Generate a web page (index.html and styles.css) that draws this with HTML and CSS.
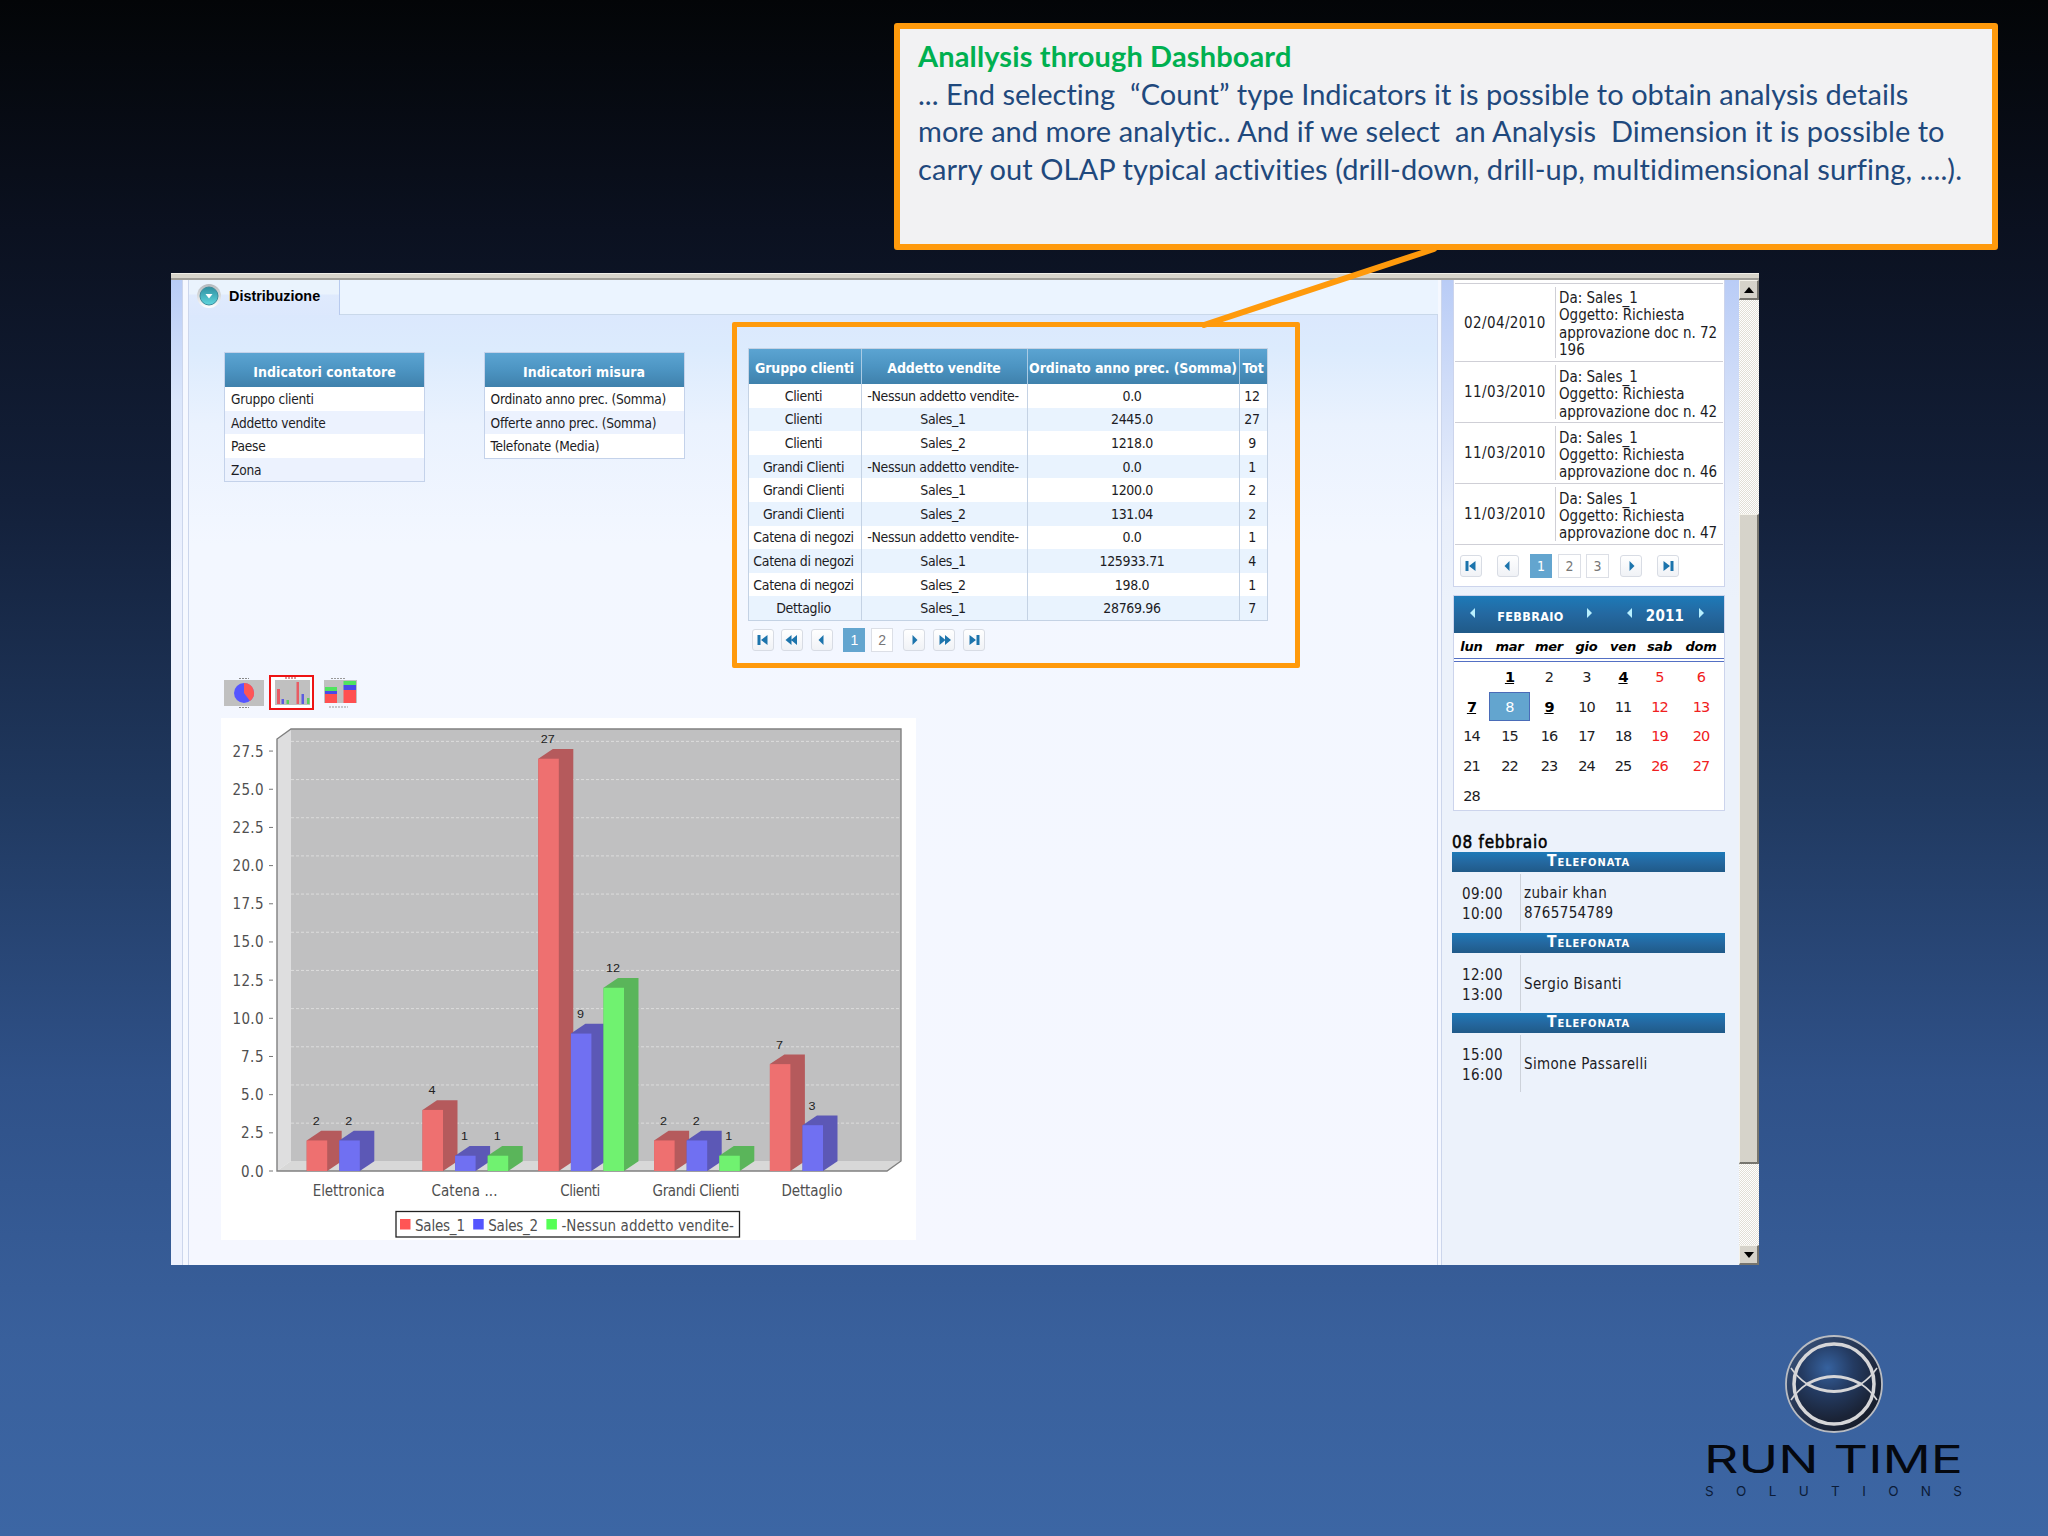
FILE: index.html
```html
<!DOCTYPE html>
<html lang="en">
<head>
    <meta charset="UTF-8">
    <title>Analysis through Dashboard</title>
    <link rel="stylesheet" href="styles.css">
</head>
<body>
    <!-- icons used by the pagers -->
    <svg class="defs" width="0" height="0">
        <symbol id="first" viewBox="0 0 20 20"><path d="M4.500 5h3v10h-3zM14.500 5v10l-6.500-5z"/></symbol>
        <symbol id="rewind" viewBox="0 0 20 20"><path d="M9.500 5v10l-6-5zM15 5v10l-6-5z"/></symbol>
        <symbol id="prev" viewBox="0 0 20 20"><path d="M11.500 5v10l-5-5z"/></symbol>
        <symbol id="next" viewBox="0 0 20 20"><path d="M8.500 5v10l5-5z"/></symbol>
        <symbol id="forward" viewBox="0 0 20 20"><path d="M5.500 5v10l6-5zM11 5v10l6-5z"/></symbol>
        <symbol id="last" viewBox="0 0 20 20"><path d="M12.500 5h3v10h-3zM5.500 5v10l6.500-5z"/></symbol>
    </svg>

    <div class="callout">
        <p class="title">Anallysis through Dashboard</p>
        <p>... End selecting  “Count” type Indicators it is possible to obtain analysis details</p>
        <p>more and more analytic.. And if we select  an Analysis  Dimension it is possible to</p>
        <p class="loose">carry out OLAP typical activities (drill-down, drill-up, multidimensional surfing, ....).</p>
    </div>

    <div class="window">
        <div class="window-top"></div>
        <div class="window-body">
            <div class="left-strip"></div>

            <main class="content">
                <div class="tabs">
                    <div class="tab">
                        <svg width="26" height="28" viewBox="0 0 26 28">
                            <defs>
                                <linearGradient id="ring" x1="0" y1="0" x2="0" y2="1">
                                    <stop offset="0" stop-color="#b4b8bc"/>
                                    <stop offset="1" stop-color="#ffffff"/>
                                </linearGradient>
                                <linearGradient id="teal" x1="0" y1="0" x2="0" y2="1">
                                    <stop offset="0" stop-color="#2f8fa0"/>
                                    <stop offset="1" stop-color="#5fd6de"/>
                                </linearGradient>
                            </defs>
                            <circle cx="13" cy="14" r="12" fill="url(#ring)"/>
                            <circle cx="13" cy="14" r="9" fill="url(#teal)" stroke="#3a8c9c"/>
                            <path d="M9.500 12h7l-3.500 4.500z" fill="#fff"/>
                        </svg>
                        <span>Distribuzione</span>
                    </div>
                    <div class="tab-rest"></div>
                </div>

                <div class="tab-page">
                    <div class="indicators">
                        <div class="list">
                            <h3>Indicatori contatore</h3>
                            <ul>
                                <li>Gruppo clienti</li>
                                <li>Addetto vendite</li>
                                <li>Paese</li>
                                <li>Zona</li>
                            </ul>
                        </div>
                        <div class="list">
                            <h3>Indicatori misura</h3>
                            <ul>
                                <li>Ordinato anno prec. (Somma)</li>
                                <li>Offerte anno prec. (Somma)</li>
                                <li>Telefonate (Media)</li>
                            </ul>
                        </div>
                        <div class="highlight">
                            <table class="data">
                                <colgroup><col class="c1"><col class="c2"><col class="c3"><col class="c4"></colgroup>
                                <thead>
                                    <tr><th>Gruppo clienti</th><th>Addetto vendite</th><th>Ordinato anno prec. (Somma)</th><th>Tot</th></tr>
                                </thead>
                                <tbody>
                                    <tr><td>Clienti</td><td>-Nessun addetto vendite-</td><td>0.0</td><td>12</td></tr>
                                    <tr><td>Clienti</td><td>Sales_1</td><td>2445.0</td><td>27</td></tr>
                                    <tr><td>Clienti</td><td>Sales_2</td><td>1218.0</td><td>9</td></tr>
                                    <tr><td>Grandi Clienti</td><td>-Nessun addetto vendite-</td><td>0.0</td><td>1</td></tr>
                                    <tr><td>Grandi Clienti</td><td>Sales_1</td><td>1200.0</td><td>2</td></tr>
                                    <tr><td>Grandi Clienti</td><td>Sales_2</td><td>131.04</td><td>2</td></tr>
                                    <tr><td>Catena di negozi</td><td>-Nessun addetto vendite-</td><td>0.0</td><td>1</td></tr>
                                    <tr><td>Catena di negozi</td><td>Sales_1</td><td>125933.71</td><td>4</td></tr>
                                    <tr><td>Catena di negozi</td><td>Sales_2</td><td>198.0</td><td>1</td></tr>
                                    <tr><td>Dettaglio</td><td>Sales_1</td><td>28769.96</td><td>7</td></tr>
                                </tbody>
                            </table>
                            <div class="pager table-pager">
                                <svg class="btn"><use href="#first"/></svg>
                                <svg class="btn"><use href="#rewind"/></svg>
                                <svg class="btn"><use href="#prev"/></svg>
                                <span class="page current">1</span>
                                <span class="page">2</span>
                                <svg class="btn"><use href="#next"/></svg>
                                <svg class="btn"><use href="#forward"/></svg>
                                <svg class="btn"><use href="#last"/></svg>
                            </div>
                        </div>
                    </div>

                    <div class="chart-types">
                        <svg width="40" height="32" viewBox="0 0 40 32">
                            <path d="M15 1.500h10M15 30.500h10" stroke="#888" stroke-dasharray="2 1"/>
                            <rect y="3" width="40" height="26" fill="#c0c0c0"/>
                            <circle cx="20" cy="16" r="10" fill="#5555ff"/>
                            <path d="M20 16V6a10 10 0 0 1 6 18z" fill="#ff5555"/>
                        </svg>
                        <svg class="selected" width="41" height="31" viewBox="0 0 41 31">
                            <rect width="41" height="31" fill="#fff"/>
                            <path d="M14 1h11" stroke="#a33" stroke-dasharray="2 1"/>
                            <rect x="4" y="3" width="35" height="25" fill="#c0c0c0"/>
                            <path d="M6 12h3v15h-3zM25.500 5h2.500v22h-2.500z" fill="#e85c64"/>
                            <path d="M10.500 22h2.500v5h-2.500zM30.500 17h2.500v10h-2.500z" fill="#5c5ce0"/>
                            <path d="M15.500 23h2.500v4h-2.500zM36 21h2.500v6h-2.500z" fill="#5cd05c"/>
                        </svg>
                        <svg width="33" height="32" viewBox="0 0 33 32">
                            <path d="M7 1.500h15M5 30h19" stroke="#999" stroke-dasharray="2 1"/>
                            <rect y="3" width="33" height="23" fill="#c0c0c0"/>
                            <path d="M1 10h12v4h-12zM19.500 4h12.500v4h-12.500z" fill="#4fe45f"/>
                            <path d="M1 14h12v3h-12zM19.500 8h12.500v5h-12.500z" fill="#4a4ae8"/>
                            <path d="M1 17h12v9h-12zM19.500 13h12.500v13h-12.500z" fill="#ff5050"/>
                        </svg>
                    </div>

                    <svg id="chart" class="chart" width="695" height="522" viewBox="221 718 695 522"></svg>
                </div>
            </main>

            <aside class="sidebar">
                <div class="messages">
                    <div class="message">
                        <span class="date">02/04/2010</span>
                        <p>Da: Sales_1<br>Oggetto: Richiesta<br>approvazione doc n. 72<br>196</p>
                    </div>
                    <div class="message">
                        <span class="date">11/03/2010</span>
                        <p>Da: Sales_1<br>Oggetto: Richiesta<br>approvazione doc n. 42</p>
                    </div>
                    <div class="message">
                        <span class="date">11/03/2010</span>
                        <p>Da: Sales_1<br>Oggetto: Richiesta<br>approvazione doc n. 46</p>
                    </div>
                    <div class="message">
                        <span class="date">11/03/2010</span>
                        <p>Da: Sales_1<br>Oggetto: Richiesta<br>approvazione doc n. 47</p>
                    </div>
                    <div class="pager message-pager">
                        <svg class="btn"><use href="#first"/></svg>
                        <svg class="btn"><use href="#prev"/></svg>
                        <span class="page current">1</span>
                        <span class="page">2</span>
                        <span class="page">3</span>
                        <svg class="btn"><use href="#next"/></svg>
                        <svg class="btn"><use href="#last"/></svg>
                    </div>
                </div>

                <div class="calendar">
                    <div class="calendar-head">
                        <i class="arrow left"></i>
                        <span class="month">FEBBRAIO</span>
                        <i class="arrow right"></i>
                        <i class="arrow left"></i>
                        <span class="year">2011</span>
                        <i class="arrow right"></i>
                    </div>
                    <div class="week weekdays">
                        <span>lun</span><span>mar</span><span>mer</span><span>gio</span><span>ven</span><span>sab</span><span>dom</span>
                    </div>
                    <div class="week days">
                        <span></span><span class="busy">1</span><span>2</span><span>3</span><span class="busy">4</span><span class="off">5</span><span class="off">6</span>
                        <span class="busy">7</span><span class="today">8</span><span class="busy">9</span><span>10</span><span>11</span><span class="off">12</span><span class="off">13</span>
                        <span>14</span><span>15</span><span>16</span><span>17</span><span>18</span><span class="off">19</span><span class="off">20</span>
                        <span>21</span><span>22</span><span>23</span><span>24</span><span>25</span><span class="off">26</span><span class="off">27</span>
                        <span>28</span>
                    </div>
                </div>

                <div class="agenda">
                    <h2>08 febbraio</h2>
                    <h4>Telefonata</h4>
                    <div class="call">
                        <span class="time">09:00<br>10:00</span>
                        <p>zubair khan<br>8765754789</p>
                    </div>
                    <h4>Telefonata</h4>
                    <div class="call">
                        <span class="time">12:00<br>13:00</span>
                        <p>Sergio Bisanti</p>
                    </div>
                    <h4>Telefonata</h4>
                    <div class="call">
                        <span class="time">15:00<br>16:00</span>
                        <p>Simone Passarelli</p>
                    </div>
                </div>
            </aside>

            <div class="scrollbar">
                <div class="scroll-btn"><i class="up"></i></div>
                <div class="track-top"></div>
                <div class="thumb"></div>
                <div class="track-bottom"></div>
                <div class="scroll-btn"><i class="down"></i></div>
            </div>
        </div>
    </div>

    <svg class="connector" width="246" height="88" viewBox="1196 244 246 88">
        <path d="M1204 325L1434 249" stroke="#ff9a0c" stroke-width="6" stroke-linecap="round"/>
    </svg>

    <svg class="logo" width="260" height="166" viewBox="1704 1332 260 166">
        <defs>
            <radialGradient id="sphere" cx=".42" cy=".3" r=".65">
                <stop offset="0" stop-color="#36629f"/>
                <stop offset=".5" stop-color="#243b62"/>
                <stop offset="1" stop-color="#1a2336"/>
            </radialGradient>
            <linearGradient id="rim" x1="0" y1="0" x2="1" y2="1">
                <stop offset="0" stop-color="#3c5884"/>
                <stop offset=".6" stop-color="#1e2940"/>
                <stop offset="1" stop-color="#12161f"/>
            </linearGradient>
        </defs>
        <circle cx="1834" cy="1384" r="48" fill="url(#rim)" stroke="#b9bcc2" stroke-width="1.800"/>
        <circle cx="1834" cy="1384" r="40" fill="url(#sphere)" stroke="#d6d6d8" stroke-width="3.500"/>
        <g fill="none" stroke="#d6d6d8">
            <path d="M1807 1384Q1834 1369 1861 1384M1807 1384Q1834 1399 1861 1384" stroke-width="3"/>
            <path d="M1807 1384Q1798 1390 1791 1400M1807 1384Q1798 1378 1791 1368M1861 1384Q1870 1390 1877 1400M1861 1384Q1870 1378 1877 1368" stroke-width="1.600"/>
        </g>
        <text class="logo-name" x="1704" y="1473" textLength="259" lengthAdjust="spacingAndGlyphs">RUN TIME</text>
        <text class="logo-sub" x="1705" y="1495.500" textLength="257" lengthAdjust="spacing">SOLUTIONS</text>
    </svg>

    <script src="chart.js"></script>
</body>
</html>
```
FILE: styles.css
```css
* {
    box-sizing: border-box;
}

body {
    position: relative;
    width: 2048px;
    height: 1536px;
    margin: 0;
    padding-top: 23px;
    overflow: hidden;
    font-family: "DejaVu Sans Condensed", "DejaVu Sans", sans-serif;
    font-stretch: condensed;
    font-size: 15px;
    color: #1c1c24;
    background: linear-gradient(#030507 0, #0b1120 230px, #13203a 500px, #203960 800px, #2f5188 1080px, #39609c 1340px, #3c66a4 1536px);
}

h2, h3, h4, p, ul {
    margin: 0;
    padding: 0;
}

.defs {
    position: absolute;
}

/* callout */
.callout {
    width: 1104px;
    height: 227px;
    margin-left: 894px;
    padding: 8px 18px;
    border: 6px solid #ff9a0c;
    border-radius: 3px;
    background: #f2f2f3;
    font-family: Lato, sans-serif;
    font-stretch: normal;
    font-size: 29px;
    line-height: 37.6px;
    color: #1f497d;
}

.callout p {
    letter-spacing: 0.03px;
    white-space: pre;
}

.callout .title {
    font-weight: bold;
    letter-spacing: 0.13px;
    color: #00b050;
}

.callout .loose {
    letter-spacing: 0.08px;
}

.connector {
    position: absolute;
    left: 1196px;
    top: 244px;
}

/* window */
.window {
    width: 1588px;
    height: 992px;
    margin: 23px 0 0 171px;
    background: #f5f8ff;
}

.window-top {
    height: 7px;
    background: #d8d5cb;
    border-top: 1px solid #f0eee8;
    border-bottom: 2px solid #a09e98;
}

.window-body {
    display: grid;
    grid-template-columns: 17px 1250px 301px 20px;
    height: 985px;
}

.left-strip {
    width: 12px;
    border-right: 1px solid #ccd6ec;
    background: linear-gradient(#b8ccf6, #dbe6fb 120px, #eef2fe 300px);
}

.content {
    display: flex;
    flex-direction: column;
    border-left: 1px solid #ccd6ec;
}

.tabs {
    display: flex;
    height: 35px;
}

.tab {
    display: flex;
    align-items: center;
    width: 151px;
    padding: 0 0 4px 7px;
    border-right: 1px solid #b8caee;
    background: linear-gradient(#eaf3fd 14px, #dfeafd 15px, #dce8fd);
    font: bold 14.4px "Liberation Sans", sans-serif;
    color: #000;
}

.tab span {
    margin-left: 7px;
}

.tab-rest {
    flex: 1;
    border-bottom: 1px solid #c9d8ea;
    background: #ebf4ff;
}

.tab-page {
    flex: 1;
    width: 1249px;
    border-right: 1px solid #ccd6ec;
    background: linear-gradient(#dbe8fd, #dcebfd 35px, #eaf2fe 110px, #f3f7ff 230px, #f5f7ff);
}

.indicators {
    display: flex;
    align-items: flex-start;
    height: 360px;
    padding: 7px 0 0 35px;
}

.list {
    width: 201px;
    margin: 29.500px 58.500px 0 0;
    border: 1px solid #c4d2ea;
}

.list + .list {
    margin-right: 47px;
}

.list h3 {
    height: 34.500px;
    padding-top: 9px;
    line-height: 20px;
    text-align: center;
    letter-spacing: 0.05px;
}

.list h3, .data th {
    font-size: 14px;
    color: #fff;
    background: linear-gradient(#5ba4d2, #4c94c2 50%, #3f81ac);
}

.list ul {
    list-style: none;
    font-size: 13.6px;
    letter-spacing: -0.24px;
}

.list li {
    height: 23.6px;
    padding-left: 6px;
    line-height: 24px;
    background: #fff;
}

.list li:nth-child(even) {
    background: #ecf2fe;
}

.highlight {
    width: 568px;
    height: 346px;
    padding: 21px 11px;
    border: 5.500px solid #ff9a0c;
    border-radius: 2px;
}

.data {
    width: 520px;
    table-layout: fixed;
    border-collapse: separate;
    border-spacing: 0;
    border: 1px solid #c4d2e4;
    font-size: 14px;
    letter-spacing: -0.35px;
    text-align: center;
    white-space: nowrap;
}

.c1 { width: 113px; }
.c2 { width: 166px; }
.c3 { width: 212px; }

.data th {
    height: 35px;
    padding: 2px 0 0;
    border-right: 1px solid #a9cbe4;
    letter-spacing: -0.1px;
}

.data td {
    height: 23.6px;
    padding: 0 2px 0 0;
    border-right: 1px solid #c4d2e4;
    background: #fff;
}

.data tr:nth-child(even) td {
    background: #e9f3fe;
}

.data th:last-child, .data td:last-child {
    border-right: none;
}

/* pagers */
.pager {
    display: flex;
    align-items: center;
}

.btn {
    width: 22px;
    height: 22px;
    border: 1px solid #d8dce4;
    border-radius: 3px;
    background: linear-gradient(#fff, #f0f2f6);
    fill: #1c74ac;
}

.page {
    width: 22px;
    height: 24px;
    border: 1px solid #dcdfe6;
    background: #fff;
    font: 14px/22px "DejaVu Sans Condensed", sans-serif;
    text-align: center;
    color: #777;
}

.page.current {
    border-color: #63a5cf;
    background: #63a5cf;
    color: #fff;
}

.table-pager {
    gap: 7.800px;
    margin: 7px 0 0 4px;
}

.table-pager .page {
    font-family: "Liberation Sans", sans-serif;
}

.table-pager .current {
    margin-left: 2.500px;
}

.table-pager .current + .page {
    margin: 0 2.500px 0 -2px;
}

/* chart */
.chart-types {
    display: flex;
    align-items: center;
    gap: 5px;
    height: 35px;
    margin-left: 35px;
}

.chart-types .selected {
    width: 45px;
    height: 35px;
    margin-right: 5px;
    border: 2px solid #ee1414;
}

.chart {
    display: block;
    margin: 8px 0 0 32px;
    background: #fff;
}

.chart text {
    font-size: 15px;
    fill: #505050;
}

.chart .value {
    font: 11.500px "Liberation Sans", sans-serif;
    fill: #222;
    text-anchor: middle;
}

/* sidebar */
.sidebar {
    padding: 0 14px 0 11px;
    margin-left: 3px;
    border-left: 1px solid #ccd6ec;
    background: linear-gradient(#b9ccf6, #cfdcf8 100px, #e9effb 230px, #ecf2fb 320px);
}

.messages {
    width: 272px;
    height: 307px;
    padding: 3px 1px 0;
    border: 1px solid #ccd4ec;
    border-top: none;
    background: #fff;
}

.message {
    display: flex;
    align-items: center;
    height: 60.850px;
    border-top: 1px solid #cfcfd6;
    line-height: 17.4px;
}

.message:first-child {
    height: 78px;
}

.message .date {
    width: 100px;
    padding: 2px 0 0 9px;
    letter-spacing: 0.4px;
}

.message p {
    height: calc(100% - 6px);
    padding: 4px 0 0 3px;
    border-left: 1px solid #cfcfd6;
    line-height: 17.3px;
    white-space: nowrap;
}

.message:first-child p {
    padding-top: 3px;
}

.message-pager {
    gap: 15px;
    height: 44px;
    padding-left: 5px;
    border-top: 1px solid #cfcfd6;
}

.message-pager .current {
    margin: 0 -9px 0 -4px;
}

.message-pager .page + .page {
    width: 23px;
    margin-right: -10px;
}

.message-pager .page + .page + .page {
    margin-right: -4px;
}

.calendar {
    width: 272px;
    height: 216px;
    margin-top: 8px;
    border: 1px solid #ccd4ec;
    background: #fff;
}

.calendar-head {
    display: grid;
    grid-template-columns: 36px 81px 36px 44px 28px 45px;
    justify-items: center;
    align-items: center;
    height: 37px;
    background: linear-gradient(#1d7ab8, #2468a0 50%, #205a88);
    color: #fff;
    font-weight: bold;
}

.month {
    padding-top: 4px;
    font-size: 12.500px;
    letter-spacing: 0.35px;
}

.year {
    padding-top: 3px;
    letter-spacing: 0.2px;
}

.arrow {
    margin-top: -4px;
    border: 5.500px solid transparent;
}

.arrow.left {
    border-left-width: 0;
    border-right-color: #b8f0ff;
}

.arrow.right {
    border-right-width: 0;
    border-left-color: #b8f0ff;
}

.week {
    display: grid;
    grid-template-columns: 35px 41px 38px 37px 36px 37px 46px;
    text-align: center;
}

.weekdays {
    height: 29px;
    border-bottom: 4px double #5470c4;
    font: italic bold 13px/27px "DejaVu Sans", sans-serif;
    letter-spacing: -0.2px;
    color: #000;
}

.days {
    grid-auto-rows: 29.7px;
    font-family: "DejaVu Sans", sans-serif;
    font-stretch: normal;
    font-size: 14.5px;
    letter-spacing: -0.9px;
}

.days span {
    line-height: 30px;
}

.days .busy {
    font-weight: bold;
    text-decoration: underline;
    color: #000;
}

.days .off {
    color: #f02020;
}

.days .today {
    border: 1px solid #4a6cb8;
    background: #63a5cf;
    color: #fff;
    line-height: 28px;
}

.agenda {
    width: 273px;
    margin: 21px 0 0 -1px;
}

.agenda h2 {
    height: 20px;
    font-size: 17px;
    font-weight: normal;
    line-height: 20px;
    letter-spacing: 0.75px;
    color: #000;
    -webkit-text-stroke: 0.5px #000;
}

.agenda h4 {
    height: 20px;
    background: linear-gradient(#1d7ab8, #2468a0 50%, #205a88);
    color: #fff;
    font-size: 15.5px;
    font-variant: small-caps;
    line-height: 18px;
    text-align: center;
    letter-spacing: 1px;
}

.call {
    display: flex;
    height: 60.5px;
    padding: 2px 0;
    line-height: 20px;
}

.time {
    width: 69px;
    padding: 10px 17px 0 0;
    border-right: 1px solid #cdd2da;
    text-align: right;
    letter-spacing: 0.4px;
}

.call p {
    align-self: center;
    padding: 2px 0 0 3px;
    letter-spacing: 0.35px;
}

/* scrollbar */
.scrollbar {
    display: grid;
    grid-template-rows: 20px 214px 650px 81px 20px;
    background: repeating-conic-gradient(#fff 0 25%, #e2dfd6 0 50%) 0 0 / 2px 2px;
}

.scroll-btn, .thumb {
    border: 1px solid #f4f2ea;
    border-right: 2px solid #77756e;
    border-bottom: 2px solid #77756e;
    background: #d6d3ca;
}

.scroll-btn {
    display: flex;
    align-items: center;
    justify-content: center;
}

.up, .down {
    border: 5px solid transparent;
}

.up {
    border-top: none;
    border-bottom: 6px solid #000;
}

.down {
    border-bottom: none;
    border-top: 6px solid #000;
}

/* logo */
.logo {
    display: block;
    margin: 67px 0 0 1704px;
}

.logo-name {
    font: 38px Inter, sans-serif;
    fill: #05080f;
}

.logo-sub {
    font: 13.500px Inter, sans-serif;
    fill: #0c1c38;
}
```
FILE: chart.js
```javascript
const svg = document.getElementById('chart');
const baseY = 1171;
const unit = 15.27;
const depthX = 14.5;
const depthY = 9.7;

const series = [
    { name: 'Sales_1', front: '#ee7070', side: '#b55a5c', swatch: '#ff5555' },
    { name: 'Sales_2', front: '#7070f2', side: '#5c58b6', swatch: '#5555ff' },
    { name: '-Nessun addetto vendite-', front: '#70f270', side: '#5ab55a', swatch: '#55ff55' }
];

const groups = [
    { name: 'Elettronica', width: 72, values: [2, 2, 0] },
    { name: 'Catena ...', width: 66, values: [4, 1, 1] },
    { name: 'Clienti', width: 40, values: [27, 9, 12] },
    { name: 'Grandi Clienti', width: 87, values: [2, 2, 1] },
    { name: 'Dettaglio', width: 61, values: [7, 3, 0] }
];

let out = '';

// walls and floor
out += '<path d="M277 739L291 729V1161L277 1171Z" fill="#dededf"/>';
out += '<path d="M277 1171L291 1161H901L887 1171Z" fill="#d8d8d8"/>';
out += '<rect x="291" y="729" width="610" height="432" fill="#c0c0c1"/>';

// axis labels and grid lines
for (let v = 0; v <= 27.5; v += 2.5) {
    const y = baseY - v * unit;
    const label = v.toFixed(1);
    const w = label.length > 3 ? 31 : 22.5;
    out += `<text x="${263.5 - w}" y="${y + 5.5}" textLength="${w}">${label}</text>`;
    out += `<path d="M269 ${y}h4" stroke="#777"/>`;
    if (v > 0) {
        out += `<path d="M291 ${y - 9.7}H900" stroke="#dcdcdc" stroke-dasharray="3 2"/>`;
    }
}
out += '<path d="M277 1171V739L291 729H901V1161L887 1171Z" fill="none" stroke="#808080" stroke-width="1.400"/>';

// bars
groups.forEach((group, g) => {
    group.values.forEach((value, s) => {
        if (!value) return;
        const x = 306.7 + g * 115.8 + s * 32.6;
        const y = baseY - value * unit;
        const w = 20.5;
        out += `<path d="M${x} ${y}l${depthX} ${-depthY}h${w}V${baseY - depthY}L${x + w} ${baseY}H${x}Z" fill="${series[s].side}"/>`;
        out += `<rect x="${x}" y="${y}" width="${w}" height="${baseY - y}" fill="${series[s].front}"/>`;
        out += `<text class="value" x="${x + 9.5}" y="${y - 15.5}" textLength="${value > 9 ? 14 : 7}" lengthAdjust="spacingAndGlyphs">${value}</text>`;
    });
    const cx = 348.7 + g * 115.8;
    out += `<text x="${cx - group.width / 2}" y="1196" textLength="${group.width}">${group.name}</text>`;
});

// legend
out += '<rect x="396" y="1211.500" width="343.500" height="25.500" fill="#fff" stroke="#222" stroke-width="1.300"/>';
series.forEach((s, i) => {
    const x = 400 + i * 73.2;
    out += `<rect x="${x}" y="1219" width="10.500" height="10.500" fill="${s.swatch}"/>`;
    out += `<text x="${x + 15}" y="1230.500" textLength="${i < 2 ? 50 : 172.5}">${s.name}</text>`;
});

svg.innerHTML = out;
```
